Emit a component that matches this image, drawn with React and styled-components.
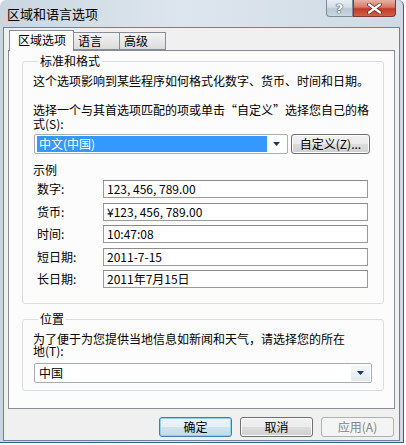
import React from 'react';
import styled, { createGlobalStyle } from 'styled-components';

const GlobalStyle = createGlobalStyle`
  body {
    margin: 0;
    background: #fff;
  }
  * {
    box-sizing: border-box;
  }
`;

const Window = styled.div`
  width: 404px;
  height: 443px;
  display: flex;
  flex-direction: column;
  padding: 0 3px 1px 3px;
  background: linear-gradient(90deg, #c9d6e1 0%, #dde6ee 45%, #cfdae4 100%);
  border-right: 1px solid #2f6479;
  border-bottom: 1px solid #2f6479;
  border-top-left-radius: 6px;
  border-top-right-radius: 6px;
  font-family: "Noto Sans CJK SC", "Noto Sans", sans-serif;
  font-size: 12px;
  color: #000;
`;

const TitleBar = styled.div`
  height: 27px;
  display: flex;
  align-items: flex-start;
  justify-content: space-between;
  padding-left: 4px;
`;

const Title = styled.div`
  font-size: 13px;
  line-height: 13px;
  margin-top: 7px;
  color: #000;
`;

const CaptionButtons = styled.div`
  display: flex;
  margin-right: 4px;
`;

const CaptionButton = styled.div`
  height: 17px;
  display: flex;
  align-items: center;
  justify-content: center;
  border: 1px solid ${p => (p.$close ? '#7c3a32' : '#7d8b97')};
  border-top: none;
  width: ${p => (p.$close ? '43px' : '27px')};
  border-bottom-left-radius: ${p => (p.$close ? '0' : '4px')};
  border-bottom-right-radius: ${p => (p.$close ? '4px' : '0')};
  background: ${p =>
    p.$close
      ? 'linear-gradient(#e8b2a5 0%, #d47a68 45%, #c23a24 55%, #d0604a 100%)'
      : 'linear-gradient(#e9eff3 0%, #d3dee6 45%, #b9c8d4 55%, #cbd7e1 100%)'};
  font-family: "DejaVu Sans", sans-serif;
  font-weight: bold;
  font-size: 13px;
  color: #fff;
  text-shadow: 0 0 1px #3d4b57, 0 0 1px #3d4b57, 0 0 1px #3d4b57;
`;

const Client = styled.div`
  height: 414px;
  display: flex;
  flex-direction: column;
  padding: 2px 4px 3px 4px;
  background: #f0f0f0;
  border: 1px solid #6f8394;
`;

const TabStrip = styled.div`
  display: flex;
  align-items: flex-end;
  height: 20px;
  padding-left: 1px;
`;

const Tab = styled.div`
  position: relative;
  z-index: ${p => (p.$active ? 1 : 0)};
  height: ${p => (p.$active ? '21px' : '18px')};
  margin-bottom: ${p => (p.$active ? '-1px' : '0')};
  margin-left: ${p => (p.$active ? '0' : '-1px')};
  padding: ${p => (p.$active ? '2px 7px 0 8px' : '1px 17px 0 4px')};
  border: 1px solid #898c95;
  border-bottom: ${p => (p.$active ? 'none' : '1px solid #898c95')};
  background: ${p => (p.$active ? '#fcfcfc' : 'linear-gradient(#f3f3f3, #dcdcdc)')};
  line-height: 14px;
  white-space: nowrap;
  &:first-child {
    margin-left: 0;
  }
`;

const Panel = styled.div`
  height: 359px;
  display: flex;
  flex-direction: column;
  border: 1px solid #898c95;
  background: #fcfcfc;
`;

const Group = styled.fieldset`
  margin: ${p => p.$top} 10px 0 13px;
  padding: ${p => p.$pad};
  border: 1px solid #d5dfe5;
  border-radius: 3px;
  min-width: 0;
`;

const Legend = styled.legend`
  padding: 0 2px;
  margin-left: 5px;
  line-height: 14px;
`;

const Para = styled.div`
  line-height: ${p => p.$lh || '14px'};
  white-space: nowrap;
  margin-top: ${p => p.$mt || '0'};
`;

const ComboRow = styled.div`
  display: flex;
  gap: 3px;
  margin-top: ${p => p.$mt || '0'};
  padding-left: 1px;
`;

const Combo = styled.div`
  width: ${p => p.$w};
  height: 20px;
  display: flex;
  align-items: center;
  padding: 1px 1px 1px 2px;
  background: #fff;
  border: 1px solid #a5acb5;
  border-radius: 2px;
`;

const ComboValue = styled.div`
  flex: 1;
  height: 100%;
  display: flex;
  align-items: center;
  padding-left: 2px;
  line-height: 14px;
  background: ${p => (p.$selected ? '#3399ff' : 'transparent')};
  color: ${p => (p.$selected ? '#fff' : '#000')};
`;

const DropButton = styled.div`
  width: 19px;
  height: 100%;
  display: flex;
  align-items: center;
  justify-content: center;
  background: ${p => (p.$shaded ? 'linear-gradient(#f6f8fa, #e3e9ee)' : 'transparent')};
`;

const PushButton = styled.div`
  width: ${p => p.$w || '73px'};
  height: 20px;
  display: flex;
  align-items: center;
  justify-content: center;
  line-height: 14px;
  border-radius: 3px;
  border: 1px solid ${p => (p.$focused ? '#3c7fb1' : p.$disabled ? '#adb2b5' : '#707070')};
  color: ${p => (p.$disabled ? '#838383' : '#000')};
  background: ${p =>
    p.$disabled
      ? '#f4f4f4'
      : p.$focused
      ? 'linear-gradient(#eef6fa 0%, #e3eff6 50%, #cfe3ee 51%, #c3dbe8 100%)'
      : 'linear-gradient(#f2f2f2 0%, #ebebeb 50%, #dddddd 51%, #cfcfcf 100%)'};
  box-shadow: ${p =>
    p.$focused ? 'inset 0 0 0 1px #8fd2ef' : p.$disabled ? 'none' : 'inset 0 0 0 1px #fcfcfc'};
`;

const SampleGrid = styled.div`
  display: grid;
  grid-template-columns: 66px 265px;
  row-gap: 4.5px;
  margin-top: 3px;
  padding-left: 4px;
`;

const SampleLabel = styled.div`
  display: flex;
  align-items: center;
  line-height: 14px;
`;

const SampleField = styled.div`
  height: 18px;
  display: flex;
  align-items: center;
  padding-left: 3px;
  background: #fff;
  border: 1px solid #9a9a9a;
  border-top-color: #8a8a8a;
  line-height: 14px;
`;

const Footer = styled.div`
  display: flex;
  justify-content: flex-end;
  gap: 8px;
  margin-top: 8px;
  padding-right: 1px;
`;

const Arrow = () => (
  <svg width="7" height="4" viewBox="0 0 7 4">
    <path d="M0 0h7L3.5 4z" fill="#1c3866" />
  </svg>
);

const CloseGlyph = () => (
  <svg width="15" height="11" viewBox="0 0 15 11">
    <path
      d="M2 1.5l11 8M13 1.5l-11 8"
      stroke="#5a2a24"
      strokeWidth="3.8"
      strokeLinecap="round"
    />
    <path
      d="M2 1.5l11 8M13 1.5l-11 8"
      stroke="#fff"
      strokeWidth="2.2"
      strokeLinecap="round"
    />
  </svg>
);

const samples = [
  ['数字:', '123, 456, 789.00'],
  ['货币:', '¥123, 456, 789.00'],
  ['时间:', '10:47:08'],
  ['短日期:', '2011-7-15'],
  ['长日期:', '2011年7月15日'],
];

export default function App() {
  return (
    <>
      <GlobalStyle />
      <Window>
        <TitleBar>
          <Title>区域和语言选项</Title>
          <CaptionButtons>
            <CaptionButton>?</CaptionButton>
            <CaptionButton $close>
              <CloseGlyph />
            </CaptionButton>
          </CaptionButtons>
        </TitleBar>
        <Client>
          <TabStrip>
            <Tab $active>区域选项</Tab>
            <Tab>语言</Tab>
            <Tab>高级</Tab>
          </TabStrip>
          <Panel>
            <Group $top="3px" $pad="6px 10px 15px 10px">
              <Legend>标准和格式</Legend>
              <Para>这个选项影响到某些程序如何格式化数字、货币、时间和日期。</Para>
              <Para $mt="15px">
                选择一个与其首选项匹配的项或单击“自定义”选择您自己的格
                <br />
                式(S):
              </Para>
              <ComboRow $mt="3px">
                <Combo $w="254px">
                  <ComboValue $selected>中文(中国)</ComboValue>
                  <DropButton>
                    <Arrow />
                  </DropButton>
                </Combo>
                <PushButton $w="79px">自定义(Z)...</PushButton>
              </ComboRow>
              <Para $mt="9px">示例</Para>
              <SampleGrid>
                {samples.map(([label, value]) => (
                  <React.Fragment key={label}>
                    <SampleLabel>{label}</SampleLabel>
                    <SampleField>{value}</SampleField>
                  </React.Fragment>
                ))}
              </SampleGrid>
            </Group>
            <Group $top="8px" $pad="7px 10px 7px 10px">
              <Legend>位置</Legend>
              <Para $lh="12px">
                为了便于为您提供当地信息如新闻和天气，请选择您的所在
                <br />
                地(T):
              </Para>
              <ComboRow $mt="6px">
                <Combo $w="338px">
                  <ComboValue>中国</ComboValue>
                  <DropButton $shaded>
                    <Arrow />
                  </DropButton>
                </Combo>
              </ComboRow>
            </Group>
          </Panel>
          <Footer>
            <PushButton $focused>确定</PushButton>
            <PushButton>取消</PushButton>
            <PushButton $disabled>应用(A)</PushButton>
          </Footer>
        </Client>
      </Window>
    </>
  );
}
